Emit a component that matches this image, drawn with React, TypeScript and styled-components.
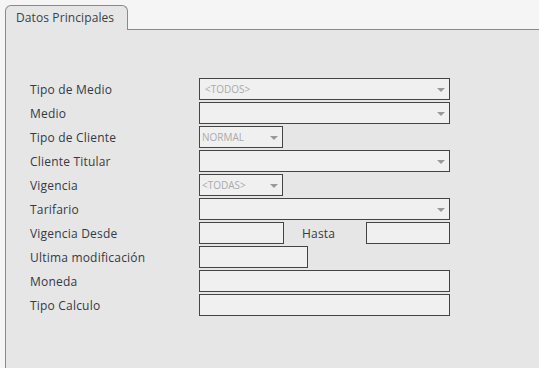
import React from 'react';
import styled, { createGlobalStyle } from 'styled-components';

const GlobalStyle = createGlobalStyle`
  html, body {
    margin: 0;
    padding: 0;
    background: #f5f5f5;
    font-family: "Open Sans", "Noto Sans", sans-serif;
  }
`;

type TWidth = 'full' | 'small' | 'date' | 'medium';

const widths: Record<TWidth, string> = {
  full: '251px',
  small: '84px',
  date: '85px',
  medium: '109px',
};

interface FieldProps {
  width: TWidth;
  select?: boolean;
  value?: string;
  indent?: boolean;
}

function Field({ width, select, value, indent }: FieldProps) {
  return (
    <Box width={width}>
      {value && <Value indent={indent}>{value}</Value>}
      {select && <Arrow />}
    </Box>
  );
}

const rows: { label: string; fields: FieldProps[] }[] = [
  { label: 'Tipo de Medio', fields: [{ width: 'full', select: true, value: '<TODOS>', indent: true }] },
  { label: 'Medio', fields: [{ width: 'full', select: true }] },
  { label: 'Tipo de Cliente', fields: [{ width: 'small', select: true, value: 'NORMAL' }] },
  { label: 'Cliente Titular', fields: [{ width: 'full', select: true }] },
  { label: 'Vigencia', fields: [{ width: 'small', select: true, value: '<TODAS>' }] },
  { label: 'Tarifario', fields: [{ width: 'full', select: true }] },
  { label: 'Vigencia Desde', fields: [{ width: 'date' }, { width: 'small' }] },
  { label: 'Ultima modificación', fields: [{ width: 'medium' }] },
  { label: 'Moneda', fields: [{ width: 'full' }] },
  { label: 'Tipo Calculo', fields: [{ width: 'full' }] },
];

export default function App() {
  return (
    <>
      <GlobalStyle />
      <Page>
        <Tab>Datos Principales</Tab>
        <Panel>
          <Form>
            {rows.map((row) => (
              <Row key={row.label}>
                <Label>{row.label}</Label>
                {row.fields.length === 2 ? (
                  <>
                    <Field {...row.fields[0]} />
                    <Hasta>Hasta</Hasta>
                    <Field {...row.fields[1]} />
                  </>
                ) : (
                  <Field {...row.fields[0]} />
                )}
              </Row>
            ))}
          </Form>
        </Panel>
      </Page>
    </>
  );
}

const Page = styled.div`
  display: flex;
  flex-direction: column;
  height: 368px;
  padding: 5px 0 0 5px;
  box-sizing: border-box;
`;

const Tab = styled.div`
  position: relative;
  z-index: 1;
  width: 123px;
  height: 25px;
  box-sizing: border-box;
  margin-bottom: -1px;
  padding: 5px 0 0 10px;
  background: #e6e6e6;
  border: 1px solid #7f8c94;
  border-bottom: none;
  border-radius: 6px 6px 0 0;
  font-size: 12px;
  line-height: 14px;
  letter-spacing: 0.1px;
  color: #39414b;
`;

const Panel = styled.div`
  flex: 1;
  background: #e6e6e6;
  border-top: 1px solid #7f8c94;
  border-left: 1px solid #7f8c94;
  padding: 48px 0 0 24px;
`;

const Form = styled.div`
  display: flex;
  flex-direction: column;
  gap: 2px;
`;

const Row = styled.div`
  display: flex;
  align-items: center;
  height: 22px;
`;

const Label = styled.div`
  width: 169px;
  font-size: 12px;
  letter-spacing: 0.2px;
  color: #333a44;
`;

const Hasta = styled.div`
  width: 82px;
  padding-left: 18px;
  box-sizing: border-box;
  font-size: 12px;
  letter-spacing: 0.2px;
  color: #333a44;
`;

const Box = styled.div<{ width: TWidth }>`
  position: relative;
  width: ${({ width }) => widths[width]};
  height: 22px;
  box-sizing: border-box;
  border: 1px solid #444;
  background: #f0f0f0;
  display: flex;
  align-items: center;
`;

const Value = styled.span<{ indent?: boolean }>`
  padding-left: ${({ indent }) => (indent ? '5px' : '2px')};
  font-size: 10px;
  color: #aaa;
`;

const Arrow = styled.span`
  position: absolute;
  right: 4px;
  top: 9px;
  width: 0;
  height: 0;
  border-left: 4px solid transparent;
  border-right: 4px solid transparent;
  border-top: 4px solid #999;
`;
